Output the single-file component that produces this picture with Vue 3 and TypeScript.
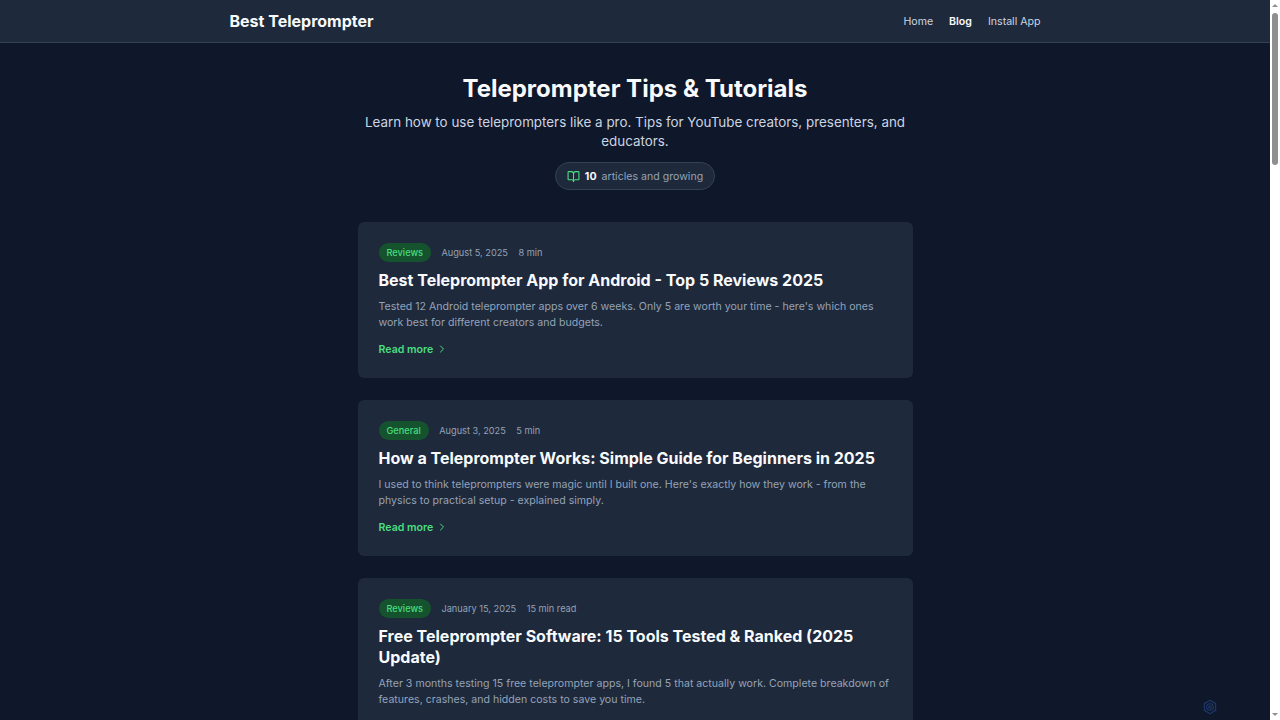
<script setup lang="ts">
interface Post { tag: string; date: string; time: string; title: string; text: string }
const posts: Post[] = [
  { tag: 'Reviews', date: 'August 5, 2025', time: '8 min', title: 'Best Teleprompter App for Android - Top 5 Reviews 2025', text: "Tested 12 Android teleprompter apps over 6 weeks. Only 5 are worth your time - here's which ones work best for different creators and budgets." },
  { tag: 'General', date: 'August 3, 2025', time: '5 min', title: 'How a Teleprompter Works: Simple Guide for Beginners in 2025', text: "I used to think teleprompters were magic until I built one. Here's exactly how they work - from the physics to practical setup - explained simply." },
  { tag: 'Reviews', date: 'January 15, 2025', time: '15 min read', title: 'Free Teleprompter Software: 15 Tools Tested & Ranked (2025 Update)', text: 'After 3 months testing 15 free teleprompter apps, I found 5 that actually work. Complete breakdown of features, crashes, and hidden costs to save you time.' },
]
</script>

<template>
  <div class="page">
    <header class="topbar">
      <div class="topbar-inner">
        <a class="logo" href="#">Best Teleprompter</a>
        <nav class="nav">
          <a href="#">Home</a>
          <a href="#" class="active">Blog</a>
          <a href="#">Install App</a>
        </nav>
      </div>
    </header>
    <main class="main">
      <section class="hero">
        <h1>Teleprompter Tips &amp; Tutorials</h1>
        <p class="lead">Learn how to use teleprompters like a pro. Tips for YouTube creators, presenters, and educators.</p>
        <div class="pill">
          <svg class="book" viewBox="0 0 24 24" fill="none" stroke="currentColor" stroke-width="2" stroke-linecap="round" stroke-linejoin="round">
            <path d="M12 7v14" />
            <path d="M3 18a1 1 0 0 1-1-1V4a1 1 0 0 1 1-1h5a4 4 0 0 1 4 4 4 4 0 0 1 4-4h5a1 1 0 0 1 1 1v13a1 1 0 0 1-1 1h-6a3 3 0 0 0-3 3 3 3 0 0 0-3-3z" />
          </svg>
          <strong>10</strong>
          <span>articles and growing</span>
        </div>
      </section>
      <section class="list">
        <article v-for="p in posts" :key="p.title" class="card">
          <div class="meta">
            <span class="badge">{{ p.tag }}</span>
            <span class="date">{{ p.date }}</span>
            <span class="date">{{ p.time }}</span>
          </div>
          <h2>{{ p.title }}</h2>
          <p class="text">{{ p.text }}</p>
          <a class="more" href="#">
            Read more
            <svg viewBox="0 0 24 24" fill="none" stroke="currentColor" stroke-width="2" stroke-linecap="round" stroke-linejoin="round"><path d="m9 18 6-6-6-6" /></svg>
          </a>
        </article>
      </section>
    </main>
    <div class="mark">
      <svg viewBox="0 0 24 24" fill="none" stroke="#1e3a6e" stroke-width="1.6">
        <path d="M12 2l8.5 5v10L12 22l-8.5-5V7z" />
        <circle cx="12" cy="12" r="5" />
        <circle cx="12" cy="12" r="2" />
      </svg>
    </div>
    <div class="scrollbar">
      <span class="arrow up"></span>
      <span class="thumb"></span>
      <span class="arrow down"></span>
    </div>
  </div>
</template>

<style>
html { background: #0f172a; }
body { margin: 0; background: #0f172a; }
</style>

<style scoped>
.page {
  width: 1270px;
  min-height: 100vh;
  background: #0f172a;
  color: #f8fafc;
  font-family: Inter, "Liberation Sans", sans-serif;
}
a { text-decoration: none; color: inherit; }
.topbar {
  background: #1e293b;
  border-bottom: 1px solid #334155;
}
.topbar-inner {
  width: 811px;
  height: 42px;
  margin: 0 auto;
  display: flex;
  align-items: center;
  justify-content: space-between;
}
.logo { font-size: 16px; font-weight: 700; color: #f8fafc; }
.nav { display: flex; gap: 16px; font-size: 10.6px; font-weight: 400; color: #cbd5e1; }
.nav .active { color: #f8fafc; font-weight: 600; }
.main { width: 555px; margin: 0 auto; padding: 31px 0 40px; }
.hero { text-align: center; margin-bottom: 32px; }
h1 { margin: 0 0 9px; font-size: 24px; line-height: 30px; font-weight: 700; color: #f8fafc; }
.lead { margin: 0 0 11px; font-size: 13.4px; line-height: 19px; color: #cbd5e1; }
.pill {
  display: inline-flex;
  align-items: center;
  height: 26px;
  padding: 0 11px;
  border: 1px solid #334155;
  border-radius: 14px;
  background: #1e293b;
  font-size: 10.6px;
  color: #94a3b8;
}
.book { width: 13px; height: 13px; color: #4ade80; margin-right: 5px; }
.pill strong { color: #f8fafc; font-weight: 700; margin-right: 5px; }
.list { display: flex; flex-direction: column; gap: 22px; }
.card {
  background: #1e293b;
  border-radius: 6px;
  padding: 21px;
  display: flex;
  flex-direction: column;
  align-items: flex-start;
}
.meta { display: flex; align-items: center; gap: 10.5px; height: 19px; font-size: 9.2px; color: #94a3b8; }
.badge {
  background: #14532d;
  color: #4ade80;
  padding: 0 8px;
  height: 19px;
  line-height: 19px;
  border-radius: 10px;
  font-weight: 500;
}
h2 { margin: 8px 0 8px; font-size: 16px; line-height: 21px; font-weight: 700; color: #f8fafc; }
.text { margin: 0 0 10px; font-size: 10.6px; line-height: 16px; color: #94a3b8; }
.more { display: flex; align-items: center; gap: 3px; height: 16px; font-size: 10.6px; font-weight: 600; color: #4ade80; }
.more svg { width: 12px; height: 12px; }
.mark { position: fixed; right: 62px; bottom: 5px; width: 16px; height: 16px; }
.mark svg { display: block; width: 16px; height: 16px; }
.scrollbar {
  position: fixed;
  top: 0;
  right: 0;
  bottom: 0;
  width: 10px;
  background: #fff;
  display: flex;
  flex-direction: column;
  align-items: center;
}
.thumb { width: 6px; height: 152px; margin-top: 6px; background: #8f8f8f; border-radius: 3px; }
.arrow { width: 0; height: 0; border-left: 3px solid transparent; border-right: 3px solid transparent; }
.arrow.up { margin-top: 4px; border-bottom: 3px solid #8f8f8f; }
.arrow.down { margin-top: auto; margin-bottom: 4px; border-top: 3px solid #8f8f8f; }
</style>
